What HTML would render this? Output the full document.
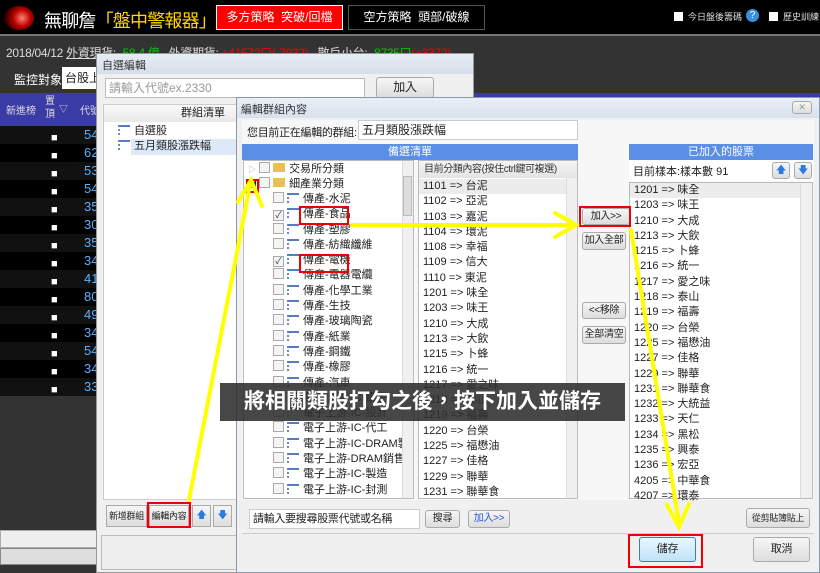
<!DOCTYPE html>
<html><head><meta charset="utf-8"><style>
*{box-sizing:border-box;margin:0;padding:0}
body{width:820px;height:573px;overflow:hidden;background:#333;position:relative;font-family:"Liberation Sans","Noto Sans CJK TC",sans-serif;font-size:12px;color:#222}
.a{position:absolute;white-space:nowrap}
.btn{position:absolute;border:1px solid #aaa;border-radius:3px;background:linear-gradient(#f6f6f6,#ddd);font-size:10px;text-align:center;line-height:16px;color:#222;white-space:nowrap;overflow:hidden;letter-spacing:-0.3px}
.red{position:absolute;border:2px solid #e00}
.row{position:absolute;height:15px;line-height:15px;font-size:11px;white-space:nowrap}
.cb{display:inline-block;width:11px;height:11px;border:1px solid #aaa;background:#f4f4f4;vertical-align:-1px;margin-right:3px}
.ic{display:inline-block;width:12px;height:10px;border-left:2px dotted #6a8ac0;border-top:2px solid #5a7ac0;vertical-align:-1px;margin-right:4px}
</style></head><body>
<div class="a" style="left:0;top:0;width:820px;height:36px;background:#000;border-bottom:2px solid #777"></div>
<div class="a" style="left:4px;top:6px;width:30px;height:24px;border-radius:50%;background:radial-gradient(circle at 60% 50%,#ff8070,#b00 40%,#300 75%)"></div>
<div class="a" style="left:44px;top:7px;font-size:18px;color:#fff;letter-spacing:-0.8px">無聊詹<span style="color:#ffd800">「盤中警報器」</span></div>
<div class="a" style="left:216px;top:5px;width:127px;height:25px;background:#f00;border:1px solid #fff;color:#fff;font-size:12px;line-height:23px;text-align:center">多方策略&nbsp; 突破/回檔</div>
<div class="a" style="left:348px;top:5px;width:137px;height:25px;border:1px solid #555;color:#fff;font-size:12px;line-height:23px;text-align:center">空方策略&nbsp; 頭部/破線</div>
<div class="a" style="left:674px;top:12px;width:9px;height:9px;background:#fff"></div>
<div class="a" style="left:688px;top:10px;color:#ddd;font-size:9px">今日盤後籌碼</div>
<div class="a" style="left:746px;top:9px;width:13px;height:13px;border-radius:50%;background:#3a8ee0;color:#fff;font-size:10px;text-align:center;line-height:13px">?</div>
<div class="a" style="left:769px;top:12px;width:9px;height:9px;background:#fff"></div>
<div class="a" style="left:783px;top:10px;color:#ddd;font-size:9px">歷史訓練</div>
<div class="a" style="left:6px;top:44px;color:#ddd;font-size:12px;letter-spacing:-0.3px">2018/04/12 <u>外資現貨:</u> <span style="color:#0c0">-58.4 億</span> &nbsp; 外資期貨: <span style="color:#f00">+41572口(-7032)</span> &nbsp; 散戶小台: <span style="color:#0c0">-8735口</span><span style="color:#f00">(+3372)</span></div>
<div class="a" style="left:14px;top:71px;color:#fff;font-size:12px">監控對象</div>
<div class="a" style="left:62px;top:67px;width:40px;height:22px;background:#fff;font-size:12px;line-height:22px;padding-left:3px">台股上</div>
<div class="a" style="left:0;top:93px;width:820px;height:33px;background:#3b3ba6"></div>
<div class="a" style="left:6px;top:102px;color:#ddd;font-size:10px">新進榜</div>
<div class="a" style="left:45px;top:95px;color:#ddd;font-size:10px;line-height:13px">置<br>頂</div>
<div class="a" style="left:59px;top:102px;color:#ddd;font-size:9px">▽</div>
<div class="a" style="left:80px;top:102px;color:#ddd;font-size:10px">代號</div>
<div class="a" style="left:0;top:126px;width:97px;height:270px;background:repeating-linear-gradient(#111 0 18px,#000 18px 36px)"></div>
<div class="a" style="left:51px;top:129px;width:8px;line-height:18px;color:#fff;font-size:11px">■<br>■<br>■<br>■<br>■<br>■<br>■<br>■<br>■<br>■<br>■<br>■<br>■<br>■<br>■</div>
<div class="a" style="left:84px;top:126px;line-height:18px;color:#59b0ff;font-size:13px">54<br>62<br>53<br>54<br>35<br>30<br>35<br>34<br>41<br>80<br>49<br>34<br>54<br>34<br>33</div>
<div class="a" style="left:0;top:530px;width:97px;height:18px;background:#eee;border:1px solid #aaa"></div>
<div class="a" style="left:0;top:548px;width:97px;height:17px;background:#ddd;border:1px solid #888"></div>
<div class="a" style="left:96px;top:53px;width:378px;height:520px;background:#f0f0f0;border:1px solid #999"></div>
<div class="a" style="left:97px;top:54px;width:376px;height:20px;background:linear-gradient(#e6edf5,#d6dfe9)"></div>
<div class="a" style="left:102px;top:57px;font-size:11px;color:#333">自選編輯</div>
<div class="a" style="left:105px;top:78px;width:260px;height:20px;background:#fff;border:1px solid #bbb;color:#999;font-size:12px;line-height:18px;padding-left:3px">請輸入代號ex.2330</div>
<div class="btn" style="left:376px;top:77px;width:58px;height:21px;line-height:19px;font-size:12px">加入</div>
<div class="a" style="left:103px;top:104px;width:140px;height:396px;background:#fff;border:1px solid #ccc"></div>
<div class="a" style="left:104px;top:105px;width:138px;height:17px;background:linear-gradient(#fafafa,#e9e9e9);font-size:11px;text-align:center;line-height:17px;padding-left:60px">群組清單</div>
<div class="row" style="left:118px;top:124px"><span class="ic"></span>自選股</div>
<div class="a" style="left:131px;top:139px;width:112px;height:16px;background:#dde9f6"></div>
<div class="row" style="left:118px;top:139px"><span class="ic"></span>五月類股漲跌幅</div>
<div class="btn" style="left:106px;top:505px;width:41px;height:22px;line-height:20px;font-size:9px;border-radius:0">新增群組</div>
<div class="btn" style="left:149px;top:505px;width:40px;height:22px;line-height:20px;font-size:9px;border-radius:0">編輯內容</div>
<div class="btn" style="left:192px;top:505px;width:19px;height:22px;line-height:20px;color:#2a7ae0;border-radius:0">🡅</div>
<div class="btn" style="left:213px;top:505px;width:19px;height:22px;line-height:20px;color:#2a7ae0;border-radius:0">🡇</div>
<div class="a" style="left:101px;top:535px;width:140px;height:35px;border:1px solid #bbb;background:#eee"></div>
<div class="red" style="left:147px;top:502px;width:44px;height:26px"></div>
<div class="a" style="left:236px;top:97px;width:584px;height:476px;background:#f0f0f0;border:1px solid #8a98aa"></div>
<div class="a" style="left:237px;top:98px;width:582px;height:20px;background:linear-gradient(#e9eff6,#d8e1ec)"></div>
<div class="a" style="left:241px;top:101px;font-size:11px;color:#333">編輯群組內容</div>
<div class="btn" style="left:792px;top:101px;width:20px;height:13px;line-height:11px;font-size:9px;color:#999">✕</div>
<div class="a" style="left:242px;top:120px;width:572px;height:380px;background:#f7f7f7"></div>
<div class="a" style="left:247px;top:124px;font-size:11px;letter-spacing:-0.3px">您目前正在編輯的群組:</div>
<div class="a" style="left:358px;top:120px;width:220px;height:20px;background:#fff;border:1px solid #ccc;padding-left:3px;line-height:18px">五月類股漲跌幅</div>
<div class="a" style="left:242px;top:144px;width:336px;height:16px;background:#5b8fe5;color:#fff;text-align:center;font-size:11px;line-height:16px">備選清單</div>
<div class="a" style="left:243px;top:160px;width:171px;height:339px;background:#fff;border:1px solid #bbb"></div>
<div class="row" style="left:248px;top:162px"><span style="color:#aaa;font-size:8px">▷</span> <span class="cb"></span><span style="display:inline-block;width:12px;height:9px;background:#e8c150;margin-right:4px"></span>交易所分類</div>
<div class="row" style="left:248px;top:177px"><span style="font-size:8px">◢</span> <span class="cb"></span><span style="display:inline-block;width:12px;height:9px;background:#e8c150;margin-right:4px"></span>細產業分類</div>
<div class="a" style="left:273px;top:192px;width:129px;height:306px;overflow:hidden;line-height:15.3px;font-size:11px">
<div><span class="cb"></span><span class="ic"></span>傳產-水泥</div>
<div><span class="cb" style="text-align:center;font-size:9px;line-height:9px;color:#335">✓</span><span class="ic"></span>傳產-食品</div>
<div><span class="cb"></span><span class="ic"></span>傳產-塑膠</div>
<div><span class="cb"></span><span class="ic"></span>傳產-紡織纖維</div>
<div><span class="cb" style="text-align:center;font-size:9px;line-height:9px;color:#335">✓</span><span class="ic"></span>傳產-電機</div>
<div><span class="cb"></span><span class="ic"></span>傳產-電器電纜</div>
<div><span class="cb"></span><span class="ic"></span>傳產-化學工業</div>
<div><span class="cb"></span><span class="ic"></span>傳產-生技</div>
<div><span class="cb"></span><span class="ic"></span>傳產-玻璃陶瓷</div>
<div><span class="cb"></span><span class="ic"></span>傳產-紙業</div>
<div><span class="cb"></span><span class="ic"></span>傳產-鋼鐵</div>
<div><span class="cb"></span><span class="ic"></span>傳產-橡膠</div>
<div><span class="cb"></span><span class="ic"></span>傳產-汽車</div>
<div><span class="cb"></span><span class="ic"></span>電子上游-IC-電子</div>
<div><span class="cb"></span><span class="ic"></span>電子上游-IC-設計</div>
<div><span class="cb"></span><span class="ic"></span>電子上游-IC-代工</div>
<div><span class="cb"></span><span class="ic"></span>電子上游-IC-DRAM製造</div>
<div><span class="cb"></span><span class="ic"></span>電子上游-DRAM銷售</div>
<div><span class="cb"></span><span class="ic"></span>電子上游-IC-製造</div>
<div><span class="cb"></span><span class="ic"></span>電子上游-IC-封測</div>
</div>
<div class="a" style="left:402px;top:161px;width:11px;height:337px;background:#f0f0f0;border-left:1px solid #ddd"></div>
<div class="a" style="left:403px;top:176px;width:9px;height:40px;background:#ddd;border:1px solid #bbb"></div>
<div class="a" style="left:418px;top:160px;width:160px;height:339px;background:#fff;border:1px solid #bbb"></div>
<div class="a" style="left:419px;top:161px;width:158px;height:17px;background:linear-gradient(#f5f5f5,#e4e4e4);font-size:10px;line-height:17px;padding-left:5px;color:#333;letter-spacing:-0.4px;overflow:hidden">目前分類內容(按住ctrl鍵可複選)</div>
<div class="a" style="left:566px;top:178px;width:11px;height:320px;background:#f0f0f0;border-left:1px solid #ddd"></div>
<div class="a" style="left:419px;top:179px;width:147px;height:15px;background:#ececec"></div>
<div class="a" style="left:423px;top:179px;line-height:15.3px;font-size:11px">1101 =&gt; 台泥<br>1102 =&gt; 亞泥<br>1103 =&gt; 嘉泥<br>1104 =&gt; 環泥<br>1108 =&gt; 幸福<br>1109 =&gt; 信大<br>1110 =&gt; 東泥<br>1201 =&gt; 味全<br>1203 =&gt; 味王<br>1210 =&gt; 大成<br>1213 =&gt; 大飲<br>1215 =&gt; 卜蜂<br>1216 =&gt; 統一<br>1217 =&gt; 愛之味<br>1218 =&gt; 泰山<br>1219 =&gt; 福壽<br>1220 =&gt; 台榮<br>1225 =&gt; 福懋油<br>1227 =&gt; 佳格<br>1229 =&gt; 聯華<br>1231 =&gt; 聯華食</div>
<div class="btn" style="left:582px;top:208px;width:48px;height:17px">加入&gt;&gt;</div>
<div class="btn" style="left:582px;top:232px;width:44px;height:18px">加入全部</div>
<div class="btn" style="left:582px;top:302px;width:44px;height:17px">&lt;&lt;移除</div>
<div class="btn" style="left:582px;top:326px;width:44px;height:18px">全部清空</div>
<div class="a" style="left:629px;top:144px;width:184px;height:16px;background:#5b8fe5;color:#fff;text-align:center;font-size:11px;line-height:16px">已加入的股票</div>
<div class="a" style="left:629px;top:160px;width:184px;height:21px;background:#fff"></div>
<div class="a" style="left:633px;top:163px;font-size:11px">目前樣本:樣本數 91</div>
<div class="btn" style="left:772px;top:162px;width:18px;height:17px;color:#2a7ae0">🡅</div>
<div class="btn" style="left:794px;top:162px;width:18px;height:17px;color:#2a7ae0">🡇</div>
<div class="a" style="left:629px;top:182px;width:184px;height:317px;background:#fff;border:1px solid #bbb"></div>
<div class="a" style="left:800px;top:183px;width:12px;height:315px;background:#f0f0f0;border-left:1px solid #ddd"></div>
<div class="a" style="left:630px;top:183px;width:170px;height:15px;background:#ececec"></div>
<div class="a" style="left:634px;top:183px;line-height:15.3px;font-size:11px">1201 =&gt; 味全<br>1203 =&gt; 味王<br>1210 =&gt; 大成<br>1213 =&gt; 大飲<br>1215 =&gt; 卜蜂<br>1216 =&gt; 統一<br>1217 =&gt; 愛之味<br>1218 =&gt; 泰山<br>1219 =&gt; 福壽<br>1220 =&gt; 台榮<br>1225 =&gt; 福懋油<br>1227 =&gt; 佳格<br>1229 =&gt; 聯華<br>1231 =&gt; 聯華食<br>1232 =&gt; 大統益<br>1233 =&gt; 天仁<br>1234 =&gt; 黑松<br>1235 =&gt; 興泰<br>1236 =&gt; 宏亞<br>4205 =&gt; 中華食<br>4207 =&gt; 環泰</div>
<div class="a" style="left:249px;top:509px;width:171px;height:20px;background:#fff;border:1px solid #ccc;font-size:11px;line-height:18px;padding-left:3px;overflow:hidden;letter-spacing:-0.3px">請輸入要搜尋股票代號或名稱</div>
<div class="btn" style="left:425px;top:510px;width:35px;height:18px">搜尋</div>
<div class="btn" style="left:468px;top:510px;width:42px;height:18px;color:#2a5ae0">加入&gt;&gt;</div>
<div class="btn" style="left:746px;top:508px;width:64px;height:20px;line-height:18px;font-size:9px">從剪貼簿貼上</div>
<div class="a" style="left:242px;top:533px;width:572px;height:1px;background:#ccc"></div>
<div class="btn" style="left:639px;top:537px;width:57px;height:25px;line-height:23px;font-size:11px;background:linear-gradient(#eaf6fd,#bfe3f8);border-color:#3c7fb1">儲存</div>
<div class="btn" style="left:753px;top:537px;width:57px;height:25px;line-height:23px;font-size:11px">取消</div>
<div class="red" style="left:246px;top:179px;width:13px;height:14px"></div>
<div class="red" style="left:299px;top:206px;width:50px;height:19px"></div>
<div class="red" style="left:299px;top:254px;width:50px;height:19px"></div>
<div class="red" style="left:579px;top:206px;width:52px;height:21px"></div>
<div class="red" style="left:628px;top:534px;width:75px;height:34px"></div>
<svg class="a" style="left:0;top:0" width="820" height="573">
<g stroke="#ffff00" stroke-width="4" fill="none" stroke-linecap="round">
<line x1="189" y1="500" x2="250" y2="185"/>
<polyline points="238,202 251,180 262,206"/>
<line x1="352" y1="225" x2="572" y2="225"/>
<polyline points="555,213 576,225 555,237"/>
<line x1="631" y1="230" x2="679" y2="523"/>
<polyline points="667,505 679,527 689,504"/>
</g>
</svg>
<div class="a" style="left:220px;top:383px;width:405px;height:38px;background:rgba(45,45,45,0.88);color:#fff;font-size:21px;font-weight:bold;line-height:38px;text-align:center">將相關類股打勾之後，按下加入並儲存</div>
</body></html>
